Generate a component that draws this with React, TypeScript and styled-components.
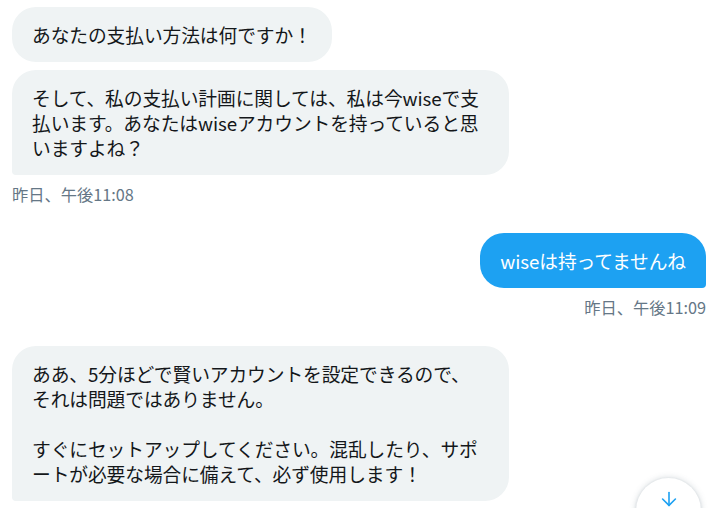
import { FunctionComponent } from 'react';
import styled, { createGlobalStyle, css } from 'styled-components';
import { ArrowDown } from 'lucide-react';

const GlobalStyle = createGlobalStyle`
  html, body {
    margin: 0;
    padding: 0;
    background: #ffffff;
    overflow: hidden;
  }
  body {
    font-family: "Noto Sans CJK JP", "Noto Sans", sans-serif;
    color: #14171a;
  }
`;

type Side = 'received' | 'sent';

export default function App() {
  return (
    <>
      <GlobalStyle />
      <Thread>
        <Group $side="received">
          <Bubble $side="received">あなたの支払い方法は何ですか！</Bubble>
          <Bubble $side="received" $last $wide>
            そして、私の支払い計画に関しては、私は今wiseで支
            <br />
            払います。あなたはwiseアカウントを持っていると思
            <br />
            いますよね？
          </Bubble>
          <Time>昨日、午後11:08</Time>
        </Group>

        <Group $side="sent">
          <Bubble $side="sent" $last>
            wiseは持ってませんね
          </Bubble>
          <Time>昨日、午後11:09</Time>
        </Group>

        <Group $side="received">
          <Bubble $side="received" $last $wide>
            ああ、5分ほどで賢いアカウントを設定できるので、
            <br />
            それは問題ではありません。
            <br />
            <br />
            すぐにセットアップしてください。混乱したり、サポ
            <br />
            ートが必要な場合に備えて、必ず使用します！
          </Bubble>
        </Group>
      </Thread>
      <ScrollDown />
    </>
  );
}

const ScrollDown: FunctionComponent = () => (
  <ScrollButton aria-label="一番下へ移動">
    <ArrowDown size={22} strokeWidth={1.75} />
  </ScrollButton>
);

const Thread = styled.div`
  display: flex;
  flex-direction: column;
  gap: 29px;
  padding: 7px 3px 0 12px;
`;

const Group = styled.div<{ $side: Side }>`
  display: flex;
  flex-direction: column;
  gap: 8px;
  align-items: ${({ $side }) => ($side === 'sent' ? 'flex-end' : 'flex-start')};
`;

const Bubble = styled.div<{ $side: Side; $last?: boolean; $wide?: boolean }>`
  box-sizing: border-box;
  max-width: 497px;
  padding: 15px 20px;
  border-radius: 24px;
  font-size: 18.75px;
  line-height: 25px;
  letter-spacing: -0.1px;
  white-space: nowrap;
  background: ${({ $side }) => ($side === 'sent' ? '#1da1f2' : '#eff3f4')};
  color: ${({ $side }) => ($side === 'sent' ? '#ffffff' : '#14171a')};
  ${({ $wide }) =>
    $wide &&
    css`
      width: 497px;
    `}
  ${({ $last, $side }) =>
    $last &&
    ($side === 'sent'
      ? css`
          border-bottom-right-radius: 4px;
        `
      : css`
          border-bottom-left-radius: 4px;
        `)}
`;

const Time = styled.div`
  font-size: 16.25px;
  line-height: 20px;
  color: #657786;
  margin-top: 1px;
`;

const ScrollButton = styled.button`
  position: fixed;
  left: 636px;
  top: 478px;
  width: 65px;
  height: 65px;
  border: none;
  border-radius: 50%;
  background: #ffffff;
  box-shadow: 0 0 6px rgba(101, 119, 134, 0.3), 0 1px 3px rgba(101, 119, 134, 0.2);
  color: #1da1f2;
  display: flex;
  justify-content: center;
  align-items: flex-start;
  padding: 10px 0 0;
  cursor: pointer;
`;
